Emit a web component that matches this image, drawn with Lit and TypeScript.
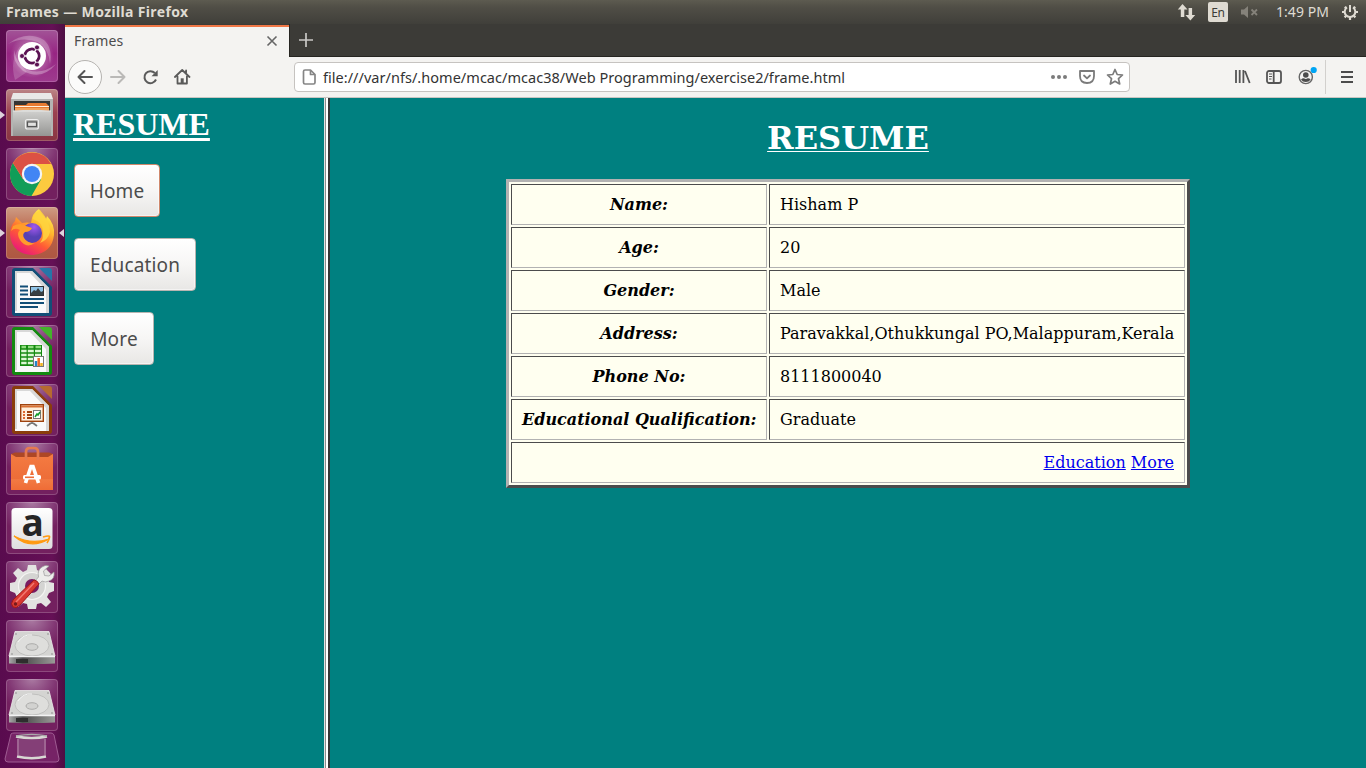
import { LitElement, html, css, svg, TemplateResult } from "lit";
import { customElement, property } from "lit/decorators.js";

interface LauncherItem {
  tone: string;
  art: TemplateResult;
  running?: boolean;
  focused?: boolean;
}

const drive = svg`
  <path d="M9 11.5H43L49 36H3Z" fill="#d4d4d2" stroke="#eeeeec" stroke-width=".8"/>
  <ellipse cx="26" cy="25.5" rx="17" ry="10.5" fill="#dededc" stroke="#b9b9b7" stroke-width=".8"/>
  <ellipse cx="26" cy="27" rx="6" ry="3.3" fill="#d2d2d0" stroke="#a0a09e" stroke-width=".8"/>
  <path d="M12 22Q17 14 26 15" fill="none" stroke="#f4f4f4"/>
  <path d="M3 36.5H49V43.5Q26 44.5 3 43.5Z" fill="url(#driveFront)"/>
  <path d="M3 36.6H49" stroke="#f3f3f3" stroke-width="1.4"/>
  <rect x="10" y="39" width="12" height="4" fill="#2e2e2e"/>
  <circle cx="10" cy="14" r=".8" fill="#888"/><circle cx="42" cy="14" r=".8" fill="#888"/>
  <circle cx="6" cy="34" r=".8" fill="#888"/><circle cx="46" cy="34" r=".8" fill="#888"/>
  <defs><linearGradient id="driveFront"><stop stop-color="#aaa"/><stop offset=".3" stop-color="#4c4c4c"/><stop offset="1" stop-color="#9a9a98"/></linearGradient></defs>`;

const office = (frame: string, fold: string, inner: TemplateResult) => svg`
  <path d="M9 2H27L46 21V47Q46 50 43 50H9Q6 50 6 47V5Q6 2 9 2Z" fill="${frame}"/>
  <path d="M33 2H43Q46 2 46 5V15Z" fill="${fold}"/>
  <path d="M9 5H26L43 22V47H9Z" fill="#fafafa"/>
  <path d="M26 5L43 22V47H40V24L24 7H11V45H9V5Z" fill="#d8d8d8"/>
  ${inner}`;

const items: LauncherItem[] = [
  {
    tone: "dash",
    art: svg`
      <defs><radialGradient id="dashGlow"><stop stop-color="#ffffff" stop-opacity=".55"/><stop offset="1" stop-color="#ffffff" stop-opacity="0"/></radialGradient></defs>
      <circle cx="26" cy="26" r="22" fill="url(#dashGlow)"/>
      <path d="M2 14Q20 0 38 10Q47 18 44 34Q43 19 32 12Q16 6 2 14Z" fill="#fff" opacity=".25"/>
      <path d="M50 34Q36 51 17 41Q6 32 8 20Q10 34 22 40Q36 45 50 34Z" fill="#fff" opacity=".28"/>
      <path d="M9 50Q3 30 15 15Q9 30 21 42" fill="#fff" opacity=".18"/>
      <circle cx="26" cy="26" r="14" fill="#fff"/>
      <circle cx="26" cy="26" r="7.1" fill="none" stroke="#5b1253" stroke-width="3"/>
      <path d="M26 26H14M26 26L32.3 15.5M26 26L32.3 36.5" stroke="#fff" stroke-width="1.4"/>
      <circle cx="26" cy="26" r="5.6" fill="#fff"/>
      <g fill="#5b1253" stroke="#fff" stroke-width=".8"><circle cx="16" cy="26" r="2.5"/><circle cx="31" cy="17.4" r="2.5"/><circle cx="31" cy="34.6" r="2.5"/></g>`,
  },
  {
    tone: "files",
    running: true,
    art: svg`
      <defs><linearGradient id="cab" x2="0" y2="1"><stop stop-color="#d2d2d0"/><stop offset="1" stop-color="#959593"/></linearGradient></defs>
      <path d="M7 4H45L47 10V21H5V10Z" fill="#e9e9e7"/><path d="M5 10H47V47H5Z" fill="#b4b4b2"/>
      <path d="M8 12H44V24H8Z" fill="#353533"/>
      <path d="M9 16H20L22 14H40L43 17V23H9Z" fill="#e77b31"/><path d="M9 17.5H43" stroke="#fff0dc" stroke-width="1.2"/><path d="M9 20H43" stroke="#f4b36e" stroke-width="1.5"/>
      <path d="M7 22L17 21H35L45 22V47H7Z" fill="url(#cab)"/><path d="M7 22H45" stroke="#e8e8e6"/>
      <rect x="19.5" y="30.5" width="13" height="9.5" rx="2" fill="#b0b0ae" stroke="#eee" stroke-width="1.2"/>
      <rect x="21.5" y="33" width="9" height="4.5" fill="#e2e2e0" stroke="#555" stroke-width="1.2"/>`,
  },
  {
    tone: "plain",
    art: svg`
      <circle cx="26" cy="26" r="22" fill="#fcca3f"/>
      <path d="M6.9 15A22 22 0 0 0 25.5 48L35 31.5L26 26L17 31Z" fill="#119d58"/>
      <path d="M6.9 15A22 22 0 0 1 45.1 16H26L17 31Z" fill="#dc5144"/>
      <circle cx="26" cy="26" r="10.2" fill="#f4f4f4"/><circle cx="26" cy="26" r="8" fill="#4285f4"/>`,
  },
  {
    tone: "fox",
    running: true,
    focused: true,
    art: svg`
      <defs>
        <linearGradient id="foxBody" x1=".85" y1=".05" x2=".3" y2="1"><stop stop-color="#fff14f"/><stop offset=".35" stop-color="#ffb52d"/><stop offset=".65" stop-color="#ff5a35"/><stop offset="1" stop-color="#e9157d"/></linearGradient>
        <radialGradient id="foxGlobe" cx=".6" cy=".2"><stop stop-color="#a458ee"/><stop offset="1" stop-color="#5641b4"/></radialGradient>
      </defs>
      <path d="M33 2Q36 8 40 12L41 9Q49 17 48 28Q46 46 27 48Q6 47 4 28Q4 19 9 14L10 10L16 16Q21 15 25 16Q26 6 33 2Z" fill="url(#foxBody)"/>
      <circle cx="26" cy="26" r="10" fill="url(#foxGlobe)"/>
      <path d="M7 19Q15 15 20 19L26 21Q24 25 19 25Q16 27 18 31Q22 37 29 36Q20 42 14 33Q10 26 14 23Q9 20 5 24Z" fill="#ff9d2b"/>
      <path d="M27 12Q36 15 37 24Q38 31 34 36Q42 33 44 25Q44 14 34 3Q27 7 27 12Z" fill="#ffd43e" opacity=".85"/>`,
  },
  {
    tone: "plain",
    art: office("#124e77", "#2676a8", svg`
      <path d="M14 20.5H22M14 24.5H22M14 28.5H22M14 33H38M14 37H38M14 41H32" stroke="#124e77" stroke-width="1.8"/>
      <rect x="24.5" y="20.5" width="13" height="9" fill="#8ec2e5" stroke="#333"/><path d="M25 29V27L28 24L30 25L32 22L35 26L37 25V29Z" fill="#374044"/>`),
  },
  {
    tone: "plain",
    art: office("#148a10", "#43b32b", svg`
      <rect x="14" y="20" width="22" height="21" fill="#148a10"/>
      <path d="M15.5 22H20M22 22H27.5M29.5 22H35" stroke="#8fdc7e" stroke-width="2.4"/>
      <g stroke="#ddf8d5" stroke-width="2.6"><path d="M15.2 26H20.6M21.8 26H27.8M29 26H35M15.2 30H20.6M21.8 30H27.8M29 30H35M15.2 34H20.6M21.8 34H27.8M15.2 38H20.6M21.8 38H27.8"/></g>
      <rect x="27.5" y="31.5" width="10" height="10" fill="#fff" stroke="#777"/><path d="M30 41V36" stroke="#2786c9" stroke-width="2.5"/><path d="M32.7 41V33" stroke="#ee6926" stroke-width="2.5"/><path d="M35.5 41V38" stroke="#f2b21b" stroke-width="2.5"/>`),
  },
  {
    tone: "plain",
    art: office("#8a3d0c", "#b66a30", svg`
      <rect x="14.7" y="20.7" width="22.6" height="16.6" fill="#fff0dc" stroke="#9e430f" stroke-width="1.4"/><path d="M15 22.5H37" stroke="#d77134" stroke-width="2"/>
      <path d="M17 28H19M17 31H19M17 34H19" stroke="#df6a2e" stroke-width="2"/><path d="M21 28H26M21 31H26M21 34H26" stroke="#9e430f" stroke-width="2"/>
      <rect x="27.5" y="26.5" width="7" height="8" fill="#fff" stroke="#777"/><path d="M29 33L31 30L32 31L34 28" fill="none" stroke="#119b29" stroke-width="1.5"/><path d="M26 38V40M25 39L21 42M27 39L31 42" stroke="#777" stroke-width="1.8"/>`),
  },
  {
    tone: "plain",
    art: svg`
      <defs><linearGradient id="bag" x2="0" y2="1"><stop stop-color="#f47b42"/><stop offset=".7" stop-color="#ed6d38"/><stop offset=".71" stop-color="#f27a43"/><stop offset="1" stop-color="#ef6c36"/></linearGradient></defs>
      <path d="M5 11L9 9.5H43L47 11V14H5Z" fill="#ad4725"/>
      <path d="M5 11L10 14H42L47 11V47H5Z" fill="url(#bag)"/>
      <path d="M20 17V9Q20 5 24 5H28Q32 5 32 9V17" fill="none" stroke="#e67a50" stroke-width="2.7"/>
      <path d="M19.5 40L25 23.5H27L32.5 40" fill="none" stroke="#fff" stroke-width="3.6"/>
      <rect x="17" y="32" width="18" height="4.6" rx="1.5" fill="#fff"/>
      <path d="M19 34.3H28" stroke="#ed6d38" stroke-width="1.6"/>`,
  },
  {
    tone: "plain",
    art: svg`
      <defs><linearGradient id="store" x2="0" y2="1"><stop stop-color="#fff"/><stop offset="1" stop-color="#dededf"/></linearGradient></defs>
      <rect x="5.5" y="6" width="41" height="41" rx="3.5" fill="url(#store)"/>
      <text class="letter" x="15.5" y="34">a</text>
      <path d="M8 34Q24 48 43 37Q25 43 8 34Z" fill="#ff9a12" stroke="#ff9a12" stroke-width="1.2"/><path d="M37 35Q44 33 43.5 35Q43 38 41 41" fill="none" stroke="#ff9a12" stroke-width="1.7"/>`,
  },
  {
    tone: "plain",
    art: svg`
      <path d="M22 4H30L31 9L35 11L40 8L45 13L42 17L43 21L48 22V30L43 32L41 36L45 41L40 46L35 42L31 43L30 48H22L21 43L17 42L12 46L7 41L11 36L9 32L4 30V22L9 21L11 17L7 12L12 7L17 11L21 9Z" fill="#e3e3e1"/>
      <circle cx="26" cy="25" r="13.5" fill="#d4d4d2" stroke="#f5f5f3" stroke-width="1.2"/><circle cx="26" cy="25" r="7" fill="#791c62"/>
      <path d="M28 21L32.5 16Q31 9 36 6Q39 3.5 43 5L37.5 10L38.5 14.5L43 15L48 11Q49 18 43 20Q39 22 36 20L31 25Z" fill="#ededeb" stroke="#999" stroke-width=".7"/>
      <path d="M28 19Q31 19 33 23L14 44Q10 48 7 46Q4 43 7 39Z" fill="#d83932" stroke="#9f1719"/><path d="M28 22L10 41" stroke="#f27970" stroke-width="1.5"/><circle cx="9.5" cy="43" r="1.7" fill="#771b1b"/>`,
  },
  { tone: "plain", art: drive },
  { tone: "plain", art: drive },
];

@customElement("side-launcher")
class SideLauncher extends LitElement {
  static styles = css`
    :host { display: block; width: 65px; height: 744px; overflow: hidden; background: linear-gradient(90deg, #590b4e, #651056 80%, #4d0f43); }
    .stack { display: flex; flex-direction: column; gap: 7px; padding-top: 6px; }
    .row { display: grid; grid-template-columns: 6px 52px 7px; align-items: center; }
    .tile { box-sizing: border-box; width: 52px; height: 52px; border-radius: 4px; box-shadow: inset 0 0 0 1px #ffffff30; }
    .plain { background: radial-gradient(ellipse 70% 60% at 50% 0, #aa7aa2 0, #813673 65%, #73205f 100%); }
    .dash { background: linear-gradient(#a25497, #972583 45%, #9e3b8e); }
    .files { background: linear-gradient(#bb8586, #9b4150 45%, #893642); }
    .fox { background: linear-gradient(#ce9c84, #b96248 50%, #ad5742); }
    svg { display: block; overflow: visible; }
    .letter { font: bold 37px "Open Sans", sans-serif; fill: #252525; }
    .running, .focused { width: 0; height: 0; border: 5px solid transparent; border-width: 4px 0; }
    .running { border-left: 5px solid #ddd2dc; }
    .focused { border-right: 5px solid #ddd2dc; grid-column: 3; justify-self: end; margin-right: 1px; }
    .trash { margin: -5px 0 0 3px; }
  `;
  render() {
    return html`<div class="stack">
      ${items.map((i) => html`<div class="row">
        <span>${i.running ? html`<div class="running"></div>` : ""}</span>
        <div class="tile ${i.tone}"><svg width="52" height="52" viewBox="0 0 52 52">${i.art}</svg></div>
        ${i.focused ? html`<div class="focused"></div>` : ""}
      </div>`)}
      <svg class="trash" width="59" height="32" viewBox="0 0 59 32">
        <path d="M8 1Q9 0 11 0H48Q50 0 51 2L56 26Q56 29 53 29H5Q2 29 2 26Z" fill="#762366" stroke="#9e5c92"/>
        <path d="M14 4V24Q29 27 43 24V4Z" fill="#8a4a7d" opacity=".75"/>
        <path d="M13 3.5Q29 6.5 44 3.5M14 23.5Q29 27 43 23.5" fill="none" stroke="#d8d8d3" stroke-width="2.5"/><path d="M13 3Q29 0 44 3" fill="none" stroke="#aaa" stroke-width="1.5"/>
        <path d="M15 6V23M42 6V23" stroke="#b88bad"/>
      </svg>
    </div>`;
  }
}

@customElement("system-bar")
class SystemBar extends LitElement {
  static styles = css`
    :host { display: flex; justify-content: space-between; height: 24px; box-sizing: border-box; padding: 0 7px 0 6px; background: linear-gradient(#5d5b50, #504e46 30%, #403f3a); color: #dfdbd2; font-family: "Noto Sans", sans-serif; }
    .title { font-size: 14px; font-weight: 700; line-height: 23px; letter-spacing: .36px; }
    .tray { display: flex; align-items: center; }
    .lang { width: 20px; height: 20px; border-radius: 2px; background: #dfdbd2; color: #3c3b37; font-size: 12px; line-height: 21px; text-align: center; letter-spacing: -.3px; margin-left: 12px; }
    .mute { margin-left: 12px; }
    .clock { font-size: 14px; line-height: 24px; width: 54px; letter-spacing: .05px; white-space: nowrap; margin-left: 16px; }
    .gear { margin-left: 11px; }
  `;
  render() {
    return html`<div class="title">Frames — Mozilla Firefox</div>
      <div class="tray">
        <svg width="19" height="20" viewBox="0 0 19 20" fill="#dfdbd2"><path d="M5.5 2L10.5 7.5H7.3V15H3.8V7.5H.8ZM13.4 18.5L8.4 13H11.6V6H15.1V13H18.2Z"/></svg>
        <div class="lang">En</div>
        <svg class="mute" width="20" height="14" viewBox="0 0 20 14" fill="#85827a"><path d="M1 4.5H4L8 1V13L4 9.5H1Z"/><path d="M11.5 4.5L17 10M17 4.5L11.5 10" stroke="#85827a" stroke-width="1.8"/></svg>
        <div class="clock">1:49 PM</div>
        <svg class="gear" width="18" height="18" viewBox="0 0 18 18" fill="none" stroke="#dfdbd2"><path d="M6 4.4A5.3 5.3 0 1 0 12 4.4" stroke-width="2"/><path d="M9 2V9" stroke-width="2"/><path d="M3.8 3.8L5 5M14.2 3.8L13 5M1 9H4M14 9H17M3.6 14.4L5.2 12.8M14.4 14.4L12.8 12.8M9 14V17" stroke-width="2.2"/></svg>
      </div>`;
  }
}

@customElement("browser-chrome")
class BrowserChrome extends LitElement {
  static styles = css`
    :host { display: block; font-family: "Noto Sans", sans-serif; color: #4c4c4c; }
    .tabs { height: 33px; display: flex; background: #3c3b37; box-sizing: border-box; }
    .tab { width: 224px; height: 33px; box-sizing: border-box; border-top: 2px solid #f07746; background: #f4f3f1; display: flex; justify-content: space-between; align-items: center; padding: 0 11px 0 9px; margin-top: 1px; font-size: 14px; letter-spacing: .2px; }
    .tab span { line-height: 20px; margin-top: -3px; }
    .tab svg { margin-top: -4px; }
    .rest { flex: 1; box-sizing: border-box; border-left: 1px solid #262521; border-bottom: 1px solid #262521; padding: 8px 0 0 8px; }
    svg { display: block; flex: none; }
    .bar { height: 41px; box-sizing: border-box; border-bottom: 1px solid #c9c6c2; background: #f4f3f1; display: flex; align-items: center; padding: 0 10px 1px 3px; }
    .back { width: 34px; height: 34px; box-sizing: border-box; border: 1px solid #b5b3b0; border-radius: 50%; display: grid; place-items: center; background: #fbfbfa; }
    .fwd { margin-left: 8px; } .reload { margin-left: 16px; } .home { margin-left: 15px; }
    .url { margin-left: 103px; width: 836px; height: 30px; box-sizing: border-box; border: 1px solid #c6c3c0; border-radius: 4px; background: #fff; display: flex; align-items: center; padding: 0 5px 0 6px; }
    .address { flex: 1; margin-left: 6px; font-size: 14.5px; letter-spacing: .03px; color: #333; line-height: 28px; padding-top: 1px; white-space: nowrap; }
    .pocket { margin-left: 10px; } .star { margin-left: 10px; }
    .lib { margin-left: 103px; } .side { margin-left: 14px; } .account { margin-left: 14px; }
    .menu { border-left: 1px solid #d2d0cd; height: 34px; display: flex; align-items: center; padding-left: 14px; margin-left: 8px; }
  `;
  render() {
    return html`<div class="tabs">
        <div class="tab"><span>Frames</span><svg width="12" height="12" viewBox="0 0 12 12" stroke="#666" stroke-width="1.6"><path d="M1.5 1.5L10.5 10.5M10.5 1.5L1.5 10.5"/></svg></div>
        <div class="rest"><svg width="16" height="16" viewBox="0 0 16 16" stroke="#c9c8c5" stroke-width="1.7"><path d="M8 1V15M1 8H15"/></svg></div>
      </div>
      <div class="bar">
        <div class="back"><svg width="16" height="16" viewBox="0 0 16 16" fill="none" stroke="#555" stroke-width="2" stroke-linecap="round" stroke-linejoin="round"><path d="M15 8H1.5M7.5 2L1.5 8L7.5 14"/></svg></div>
        <svg class="fwd" width="16" height="16" viewBox="0 0 16 16" fill="none" stroke="#bab9b7" stroke-width="2" stroke-linecap="round" stroke-linejoin="round"><path d="M1 8H14.5M8.5 2L14.5 8L8.5 14"/></svg>
        <svg class="reload" width="17" height="16" viewBox="0 0 17 16" fill="none" stroke="#5a5a5a" stroke-width="2"><path d="M14 10.5A6 6 0 1 1 12.8 4"/><path d="M15.7 1V7.2H9.5Z" fill="#5a5a5a" stroke="none"/></svg>
        <svg class="home" width="17" height="17" viewBox="0 0 17 17" fill="none" stroke="#5a5a5a" stroke-width="1.8" stroke-linejoin="round" stroke-linecap="round"><path d="M.9 9L8.2 2L15.5 9M3.5 8.5V15.5H12.9V8.5M12.1 2.5V4.5"/><path d="M6.7 15V10.3H9.7V15" fill="#5a5a5a" stroke="none"/></svg>
        <div class="url">
          <svg width="16" height="16" viewBox="0 0 16 16" fill="none" stroke="#858585" stroke-width="1.7" stroke-linejoin="round"><path d="M4 1H9.5L14 5.5V13.5Q14 15 12.5 15H4Q2.5 15 2.5 13.5V2.5Q2.5 1 4 1ZM9.5 1V5.5H14"/></svg>
          <div class="address">file:///var/nfs/.home/mcac/mcac38/Web Programming/exercise2/frame.html</div>
          <svg width="18" height="16" viewBox="0 0 18 16" fill="#7b7b7b"><circle cx="3" cy="8" r="2"/><circle cx="9" cy="8" r="2"/><circle cx="15" cy="8" r="2"/></svg>
          <svg class="pocket" width="18" height="16" viewBox="0 0 18 16" fill="none" stroke="#7b7b7b" stroke-width="1.8" stroke-linecap="round" stroke-linejoin="round"><path d="M2 2H16V7Q16 14 9 14Q2 14 2 7Z"/><path d="M6 6.5L9 9.3L12 6.5"/></svg>
          <svg class="star" width="18" height="18" viewBox="0 0 18 18" fill="none" stroke="#7b7b7b" stroke-width="1.7" stroke-linejoin="round"><path d="M9 1.5L11.2 6.5L16.5 7L12.5 10.7L13.7 16L9 13.3L4.3 16L5.5 10.7L1.5 7L6.8 6.5Z"/></svg>
        </div>
        <svg class="lib" width="18" height="16" viewBox="0 0 18 16" stroke="#555" stroke-width="1.8"><path d="M3 1V14M6.7 1V14M10.4 1V14M12 2L16.7 14"/></svg>
        <svg class="side" width="18" height="16" viewBox="0 0 18 16" fill="none" stroke="#555" stroke-width="1.8"><rect x="2" y="2" width="14" height="12" rx="2"/><path d="M8.7 2V14"/><path d="M4 5H7M4 7.5H7M4 10H6.5" stroke-width="1"/></svg>
        <svg class="account" width="20" height="24" viewBox="0 0 20 24" fill="none"><circle cx="8.8" cy="12" r="6.6" stroke="#666" stroke-width="1.4"/><circle cx="8.8" cy="10" r="2.8" fill="#4c4c4c"/><path d="M4 14.5Q5.5 13 7 13.3Q8.8 14.5 10.6 13.3Q12.3 13 13.6 14.5Q12 17 8.8 17Q5.6 17 4 14.5Z" fill="#4c4c4c"/><circle cx="16.7" cy="5" r="3.1" fill="#00a5f4"/></svg>
        <div class="menu"><svg width="14" height="14" viewBox="0 0 14 14" stroke="#4c4c4c" stroke-width="2"><path d="M1 2H13M1 7H13M1 12H13"/></svg></div>
      </div>`;
  }
}

@customElement("nav-button")
class NavButton extends LitElement {
  @property() label = "";
  @property({ type: Number }) span = 80;
  @property({ type: Boolean }) active = false;
  static styles = css`
    :host { display: block; }
    button { height: 53px; display: block; box-sizing: border-box; padding: 0; border: 1px solid #b8b5b1; border-radius: 4px; background: linear-gradient(#fff, #f7f6f5 50%, #e8e7e5); box-shadow: inset 0 0 0 1px #ffffff80; color: #4c4c4c; font: 19px/50px "Noto Sans", sans-serif; white-space: nowrap; }
    .active { border-color: #cf886c; }
    .label { letter-spacing: .15px; }
  `;
  render() {
    return html`<button class=${this.active ? "active" : ""} style="width:${this.span}px"><span class="label">${this.label}</span></button>`;
  }
}

const rows = [
  ["Name:", "Hisham P"],
  ["Age:", "20"],
  ["Gender:", "Male"],
  ["Address:", "Paravakkal,Othukkungal PO,Malappuram,Kerala"],
  ["Phone No:", "8111800040"],
  ["Educational Qualification:", "Graduate"],
];

@customElement("resume-page")
class ResumePage extends LitElement {
  static styles = css`
    :host { display: flex; height: 670px; background: #008080; }
    .menu { width: 259px; box-sizing: border-box; padding: 8px 0 0 8px; }
    .menu h1 { margin: 0; font: bold 32px/37px "Liberation Serif", serif; color: #fff; text-decoration: underline 3px; text-underline-offset: 3px; }
    .links { display: flex; flex-direction: column; gap: 21px; padding: 21px 0 0 1px; }
    .divider { width: 6px; background: linear-gradient(90deg, #e3e3e3 1px, #8c8c8c 1px, #8c8c8c 2px, #fff 2px, #fff 4px, #363636 4px); }
    .main { flex: 1; display: flex; flex-direction: column; align-items: center; font-family: "DejaVu Serif", serif; padding-top: 22px; }
    .main h1 { margin: 0; font-size: 32px; line-height: 37px; font-weight: bold; color: #fff; text-decoration: underline 1px; text-underline-offset: 2px; }
    table { margin-top: 22px; width: 684px; table-layout: fixed; box-sizing: border-box; border: 3px solid; border-color: #b2b2b2 #4c4c4c #4c4c4c #b2b2b2; border-spacing: 2px; background: #fffff0; font-size: 16px; line-height: 19px; color: #000; }
    td, th { height: 41px; box-sizing: border-box; padding: 0 10px; border: 1px solid; border-color: #4c4c4c #b2b2b2 #b2b2b2 #4c4c4c; white-space: nowrap; }
    .key { width: 256px; font-style: italic; text-align: center; }
    .foot { text-align: right; }
    a { color: #0000ee; text-decoration: underline 1px; }
  `;
  render() {
    return html`<div class="menu"><h1>RESUME</h1>
        <div class="links"><nav-button label="Home" span="86" active></nav-button><nav-button label="Education" span="122"></nav-button><nav-button label="More" span="80"></nav-button></div>
      </div>
      <div class="divider"></div>
      <div class="main"><h1>RESUME</h1>
        <table><tbody>
          ${rows.map(([k, v]) => html`<tr><th class="key">${k}</th><td>${v}</td></tr>`)}
          <tr><td class="foot" colspan="2"><a href="#education">Education</a> <a href="#more">More</a></td></tr>
        </tbody></table>
      </div>`;
  }
}

@customElement("app-root")
class AppRoot extends LitElement {
  static styles = css`
    :host { display: block; width: 1366px; height: 768px; overflow: hidden; }
    .desk { display: grid; grid-template-columns: 65px 1301px; }
  `;
  render() {
    return html`<system-bar></system-bar>
      <div class="desk"><side-launcher></side-launcher><div><browser-chrome></browser-chrome><resume-page></resume-page></div></div>`;
  }
}
